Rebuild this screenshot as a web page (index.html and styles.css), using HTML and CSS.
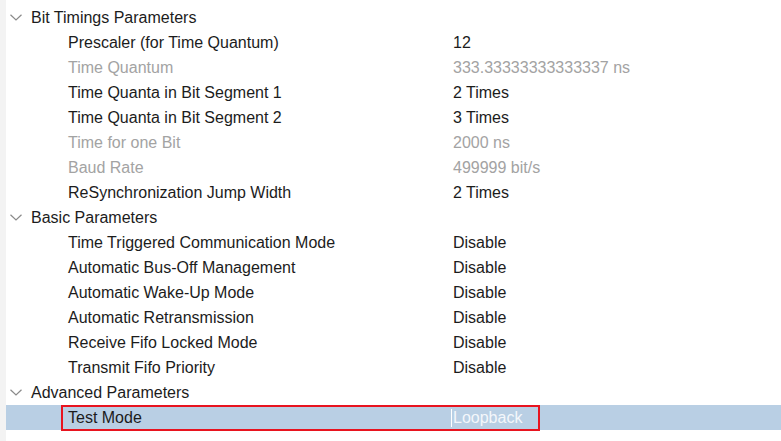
FILE: index.html
```html
<!DOCTYPE html>
<html>
<head>
<meta charset="utf-8">
<link rel="stylesheet" href="styles.css">
</head>
<body>
<div class="page">
  <div class="strip"></div>
  <div class="tree">
    <div class="group">
      <svg class="chev" width="12" height="7" viewBox="0 0 12 7"><path d="M0.5 0.8 L6 6 L11.5 0.8" fill="none" stroke="#8a8a8a" stroke-width="1.2"/></svg>
      <span>Bit Timings Parameters</span>
    </div>
    <div class="row"><span class="label">Prescaler (for Time Quantum)</span><span class="value">12</span></div>
    <div class="row dim"><span class="label">Time Quantum</span><span class="value">333.33333333333337 ns</span></div>
    <div class="row"><span class="label">Time Quanta in Bit Segment 1</span><span class="value">2 Times</span></div>
    <div class="row"><span class="label">Time Quanta in Bit Segment 2</span><span class="value">3 Times</span></div>
    <div class="row dim"><span class="label">Time for one Bit</span><span class="value">2000 ns</span></div>
    <div class="row dim"><span class="label">Baud Rate</span><span class="value">499999 bit/s</span></div>
    <div class="row"><span class="label">ReSynchronization Jump Width</span><span class="value">2 Times</span></div>
    <div class="group">
      <svg class="chev" width="12" height="7" viewBox="0 0 12 7"><path d="M0.5 0.8 L6 6 L11.5 0.8" fill="none" stroke="#8a8a8a" stroke-width="1.2"/></svg>
      <span>Basic Parameters</span>
    </div>
    <div class="row"><span class="label">Time Triggered Communication Mode</span><span class="value">Disable</span></div>
    <div class="row"><span class="label">Automatic Bus-Off Management</span><span class="value">Disable</span></div>
    <div class="row"><span class="label">Automatic Wake-Up Mode</span><span class="value">Disable</span></div>
    <div class="row"><span class="label">Automatic Retransmission</span><span class="value">Disable</span></div>
    <div class="row"><span class="label">Receive Fifo Locked Mode</span><span class="value">Disable</span></div>
    <div class="row"><span class="label">Transmit Fifo Priority</span><span class="value">Disable</span></div>
    <div class="group">
      <svg class="chev" width="12" height="7" viewBox="0 0 12 7"><path d="M0.5 0.8 L6 6 L11.5 0.8" fill="none" stroke="#8a8a8a" stroke-width="1.2"/></svg>
      <span>Advanced Parameters</span>
    </div>
    <div class="row selected"><span class="label">Test Mode</span><span class="value edit">Loopback</span><div class="redbox"></div></div>
  </div>
</div>
</body>
</html>
```

FILE: styles.css
```css
html, body {
  margin: 0;
  padding: 0;
  background: #ffffff;
}
body {
  font-family: "Liberation Sans", Arial, sans-serif;
  font-size: 16px;
  color: #1c1c1c;
  width: 781px;
  height: 441px;
  overflow: hidden;
}
.page {
  display: flex;
  height: 441px;
}
.strip {
  width: 6px;
  background: #f3f3f3;
  flex: none;
}
.tree {
  flex: 1;
  padding-top: 5px;
}
.group {
  height: 25px;
  display: flex;
  align-items: center;
}
.chev {
  margin-left: 4px;
  margin-right: 9px;
  flex: none;
}
.row {
  height: 25px;
  display: flex;
  align-items: center;
  position: relative;
}
.label {
  width: 385px;
  padding-left: 62px;
  flex: none;
}
.dim {
  color: #a3a3a3;
}
.selected {
  background: #b9cfe4;
}
.edit {
  color: #f4f7fb;
  border-left: 1px solid #ffffff;
  padding-left: 1px;
  margin-left: -2px;
}
.redbox {
  position: absolute;
  left: 55px;
  top: 0;
  width: 479px;
  height: 26px;
  border: 2px solid #e8141f;
  box-sizing: border-box;
}
```
